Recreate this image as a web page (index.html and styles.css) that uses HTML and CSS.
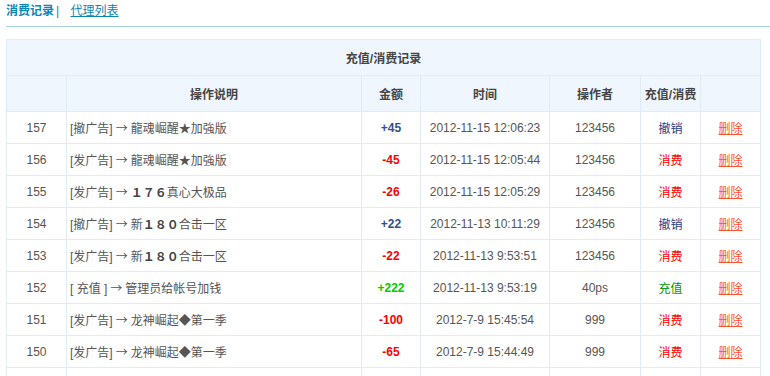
FILE: index.html
```html
<!DOCTYPE html>
<html lang="zh-CN">
<head>
<meta charset="utf-8">
<title>消费记录</title>
<link rel="stylesheet" href="styles.css">
</head>
<body>
<div class="nav">
  <span class="nav-cur">消费记录</span><span class="nav-sep">|</span>
  <a class="nav-link" href="#">代理列表</a>
</div>
<table class="rec">
  <colgroup>
    <col class="c-id"><col class="c-desc"><col class="c-amt"><col class="c-time"><col class="c-op"><col class="c-type"><col class="c-del">
  </colgroup>
  <tr class="title-row"><th colspan="7">充值/消费记录</th></tr>
  <tr class="head-row">
    <th></th><th>操作说明</th><th>金额</th><th>时间</th><th>操作者</th><th>充值/消费</th><th></th>
  </tr>
  <tr><td>157</td><td class="desc">[撤广告]<span class="arr">→</span>龍魂崛醒★加強版</td><td class="amt plus">+45</td><td>2012-11-15 12:06:23</td><td>123456</td><td class="t-undo">撤销</td><td><a class="del" href="#">删除</a></td></tr>
  <tr><td>156</td><td class="desc">[发广告]<span class="arr">→</span>龍魂崛醒★加強版</td><td class="amt minus">-45</td><td>2012-11-15 12:05:44</td><td>123456</td><td class="t-spend">消费</td><td><a class="del" href="#">删除</a></td></tr>
  <tr><td>155</td><td class="desc">[发广告]<span class="arr">→</span><span class="fw">１７６</span>真心大极品</td><td class="amt minus">-26</td><td>2012-11-15 12:05:29</td><td>123456</td><td class="t-spend">消费</td><td><a class="del" href="#">删除</a></td></tr>
  <tr><td>154</td><td class="desc">[撤广告]<span class="arr">→</span>新<span class="fw">１８０</span>合击一区</td><td class="amt plus">+22</td><td>2012-11-13 10:11:29</td><td>123456</td><td class="t-undo">撤销</td><td><a class="del" href="#">删除</a></td></tr>
  <tr><td>153</td><td class="desc">[发广告]<span class="arr">→</span>新<span class="fw">１８０</span>合击一区</td><td class="amt minus">-22</td><td>2012-11-13 9:53:51</td><td>123456</td><td class="t-spend">消费</td><td><a class="del" href="#">删除</a></td></tr>
  <tr><td>152</td><td class="desc">[ 充值 ]<span class="arr">→</span>管理员给帐号加钱</td><td class="amt charge">+222</td><td>2012-11-13 9:53:19</td><td>40ps</td><td class="t-charge">充值</td><td><a class="del" href="#">删除</a></td></tr>
  <tr><td>151</td><td class="desc">[发广告]<span class="arr">→</span>龙神崛起◆第一季</td><td class="amt minus">-100</td><td>2012-7-9 15:45:54</td><td>999</td><td class="t-spend">消费</td><td><a class="del" href="#">删除</a></td></tr>
  <tr><td>150</td><td class="desc">[发广告]<span class="arr">→</span>龙神崛起◆第一季</td><td class="amt minus">-65</td><td>2012-7-9 15:44:49</td><td>999</td><td class="t-spend">消费</td><td><a class="del" href="#">删除</a></td></tr>
  <tr><td></td><td></td><td></td><td></td><td></td><td></td><td></td></tr>
</table>
</body>
</html>
```
FILE: styles.css
```css
html, body {
  margin: 0;
  padding: 0;
  background: #fff;
}
body {
  font-family: "Liberation Sans", "Noto Sans CJK SC", sans-serif;
  font-size: 12px;
  color: #555;
  padding: 0 6px;
}
.nav {
  height: 26px;
  border-bottom: 1px solid #a6d3d9;
  line-height: 22px;
  font-size: 12px;
  margin-right: -6px;
}
.nav-cur {
  font-weight: bold;
  color: #0a86b8;
}
.nav-sep {
  color: #0a86b8;
  margin: 0 4px 0 2px;
}
.nav-link {
  color: #0a86b8;
  text-decoration: underline;
  margin-left: 4px;
}
.rec {
  margin-top: 12px;
  border-collapse: collapse;
  table-layout: fixed;
  width: 755px;
}
.c-id { width: 60px; }
.c-desc { width: 295px; }
.c-amt { width: 59px; }
.c-time { width: 129px; }
.c-op { width: 91px; }
.c-type { width: 60px; }
.c-del { width: 60px; }
.rec th, .rec td {
  border: 1px solid #dfebf7;
  text-align: center;
  padding: 0;
  white-space: nowrap;
  overflow: hidden;
}
.rec th {
  background: #f0f6fd;
  color: #444;
  font-weight: bold;
  height: 35px;
}
.rec td {
  height: 31px;
}
.rec td.desc {
  text-align: left;
  padding-left: 3px;
}
.arr {
  font-family: "Noto Sans CJK SC", sans-serif;
  margin: 0 3px;
}
.fw {
  font-family: "Noto Sans CJK SC", sans-serif;
  font-weight: bold;
  color: #444;
}
.amt { font-weight: bold; }
.plus { color: #33508a; }
.minus { color: #f00; }
.charge { color: #0c0; }
.t-undo { color: #1c3a86; }
.t-spend { color: #f00; }
.t-charge { color: #090; }
.del {
  color: #f4572c;
  text-decoration: underline;
}
```
